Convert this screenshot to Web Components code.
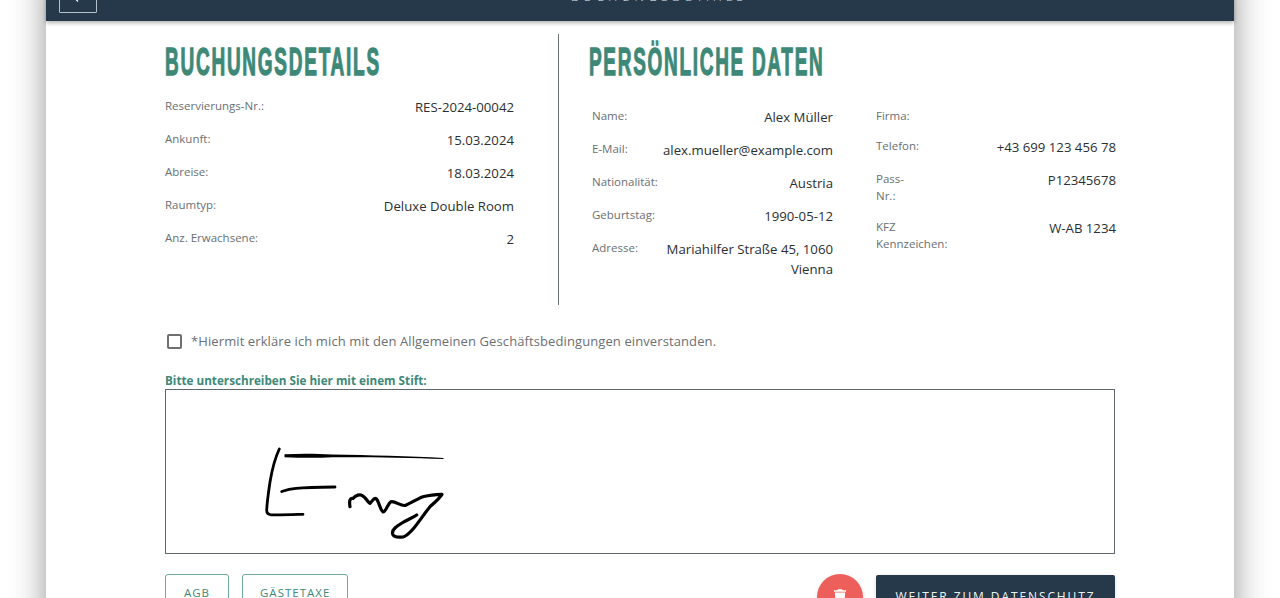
<!DOCTYPE html>
<html lang="de">
<head>
<meta charset="utf-8">
<title>Buchungsdetails</title>
<style>
html, body { margin: 0; height: 598px; overflow: hidden; background: #fff; }
body { font-family: "Open Sans", "Liberation Sans", sans-serif; color: #2b2f33; }
</style>
</head>
<body>
<checkin-page>
  <checkin-header slot="header">BUCHUNGSDETAILS</checkin-header>

  <details-split>
    <div slot="left">
      <section-title spacing="3.5">BUCHUNGSDETAILS</section-title>
      <detail-row><span slot="label">Reservierungs-Nr.:</span>RES-2024-00042</detail-row>
      <detail-row><span slot="label">Ankunft:</span>15.03.2024</detail-row>
      <detail-row><span slot="label">Abreise:</span>18.03.2024</detail-row>
      <detail-row><span slot="label">Raumtyp:</span>Deluxe Double Room</detail-row>
      <detail-row><span slot="label">Anz. Erwachsene:</span>2</detail-row>
    </div>
    <div slot="right">
      <section-title spacing="3.4">PERSÖNLICHE DATEN</section-title>
      <details-columns>
        <div slot="first">
          <detail-row><span slot="label">Name:</span>Alex Müller</detail-row>
          <detail-row><span slot="label">E-Mail:</span>alex.mueller@example.com</detail-row>
          <detail-row><span slot="label">Nationalität:</span>Austria</detail-row>
          <detail-row><span slot="label">Geburtstag:</span>1990-05-12</detail-row>
          <detail-row><span slot="label">Adresse:</span>Mariahilfer Straße 45, 1060 Vienna</detail-row>
        </div>
        <div slot="second">
          <detail-row><span slot="label">Firma:</span></detail-row>
          <detail-row><span slot="label">Telefon:</span>+43 699 123 456 78</detail-row>
          <detail-row><span slot="label">Pass-<br>Nr.:</span>P12345678</detail-row>
          <detail-row><span slot="label">KFZ<br>Kennzeichen:</span>W-AB 1234</detail-row>
        </div>
      </details-columns>
    </div>
  </details-split>

  <terms-check>*Hiermit erkläre ich mich mit den Allgemeinen Geschäftsbedingungen einverstanden.</terms-check>
  <signature-pad>Bitte unterschreiben Sie hier mit einem Stift:</signature-pad>

  <action-bar>
    <outline-button slot="left">AGB</outline-button>
    <outline-button slot="left">GÄSTETAXE</outline-button>
    <trash-button slot="right"></trash-button>
    <primary-button slot="right">WEITER ZUM DATENSCHUTZ</primary-button>
  </action-bar>
</checkin-page>

<script>
// kleine Hilfsfunktion: Shadow Root mit Markup anlegen
function shadow(el, html) {
  el.attachShadow({ mode: "open" }).innerHTML = html;
}

class CheckinPage extends HTMLElement {
  constructor() {
    super();
    shadow(this, `
      <style>
        :host { display: block; margin: -30px 46px 0; background: #fff; height: 700px;
                box-shadow: 0 0 32px rgba(0,0,0,.42); }
        .content { padding: 13px 119px 0; }
      </style>
      <slot name="header"></slot>
      <div class="content"><slot></slot></div>`);
  }
}
customElements.define("checkin-page", CheckinPage);

class CheckinHeader extends HTMLElement {
  constructor() {
    super();
    shadow(this, `
      <style>
        :host { display: flex; align-items: flex-end; height: 51px; box-sizing: border-box;
                padding: 0 13px 8px; background: #25394a; color: #d5dce1;
                box-shadow: 0 2px 4px rgba(0,0,0,.3); position: relative; }
        .back { box-sizing: border-box; width: 38px; height: 38px; flex: none;
                border: 1px solid #b4c2cc; border-radius: 1px; display: flex;
                align-items: center; justify-content: center; }
        .title { flex: 1; text-align: center; margin-bottom: 8px;
                 font-size: 13px; line-height: 18px; letter-spacing: 3.9px; font-weight: 300; }
      </style>
      <div class="back">
        <svg width="16" height="15" viewBox="0 0 16 15" fill="none" stroke="#fff" stroke-width="1.2">
          <path d="M15 7.5H1M8 .5l-7 7 7 7"/>
        </svg>
      </div>
      <div class="title"><slot></slot></div>`);
  }
}
customElements.define("checkin-header", CheckinHeader);

class DetailsSplit extends HTMLElement {
  constructor() {
    super();
    shadow(this, `
      <style>
        :host { display: flex; }
        .left { box-sizing: border-box; width: 394px; padding-right: 44px;
                border-right: 1px solid #6c7478; }
        .right { flex: 1; padding-left: 30px; padding-bottom: 13px; }
      </style>
      <div class="left"><slot name="left"></slot></div>
      <div class="right"><slot name="right"></slot></div>`);
  }
}
customElements.define("details-split", DetailsSplit);

class DetailsColumns extends HTMLElement {
  constructor() {
    super();
    shadow(this, `
      <style>
        :host { display: grid; grid-template-columns: 241px 240px; column-gap: 43px;
                padding: 10px 0 0 3px; }
      </style>
      <slot name="first"></slot>
      <slot name="second"></slot>`);
  }
}
customElements.define("details-columns", DetailsColumns);

class SectionTitle extends HTMLElement {
  constructor() {
    super();
    shadow(this, `
      <style>
        :host { display: block; height: 63px; }
        h2 { margin: 0; padding-top: 5px; font: 700 38px/46px "Liberation Sans", sans-serif;
             color: #3e8877; white-space: nowrap; transform-origin: left top;
             -webkit-text-stroke: 1.3px #3e8877; transform: scaleX(.5);
             letter-spacing: var(--spacing, 3px); }
      </style>
      <h2><slot></slot></h2>`);
    this.shadowRoot.querySelector("h2").style.setProperty("--spacing", this.getAttribute("spacing") + "px");
  }
}
customElements.define("section-title", SectionTitle);

class DetailRow extends HTMLElement {
  constructor() {
    super();
    shadow(this, `
      <style>
        :host { display: flex; justify-content: space-between; gap: 6px; margin-bottom: 13px; }
        .label { flex: none; font-size: 11.5px; line-height: 17.2px; color: #6a6f73; }
        .value { font-size: 13.2px; line-height: 20px; color: #2b2f33; text-align: right; }
      </style>
      <div class="label"><slot name="label"></slot></div>
      <div class="value"><slot></slot></div>`);
  }
}
customElements.define("detail-row", DetailRow);

class TermsCheck extends HTMLElement {
  constructor() {
    super();
    shadow(this, `
      <style>
        :host { display: flex; align-items: center; height: 20px; margin-top: 26px; padding-left: 2px; }
        .box { box-sizing: border-box; width: 15px; height: 15px; flex: none; margin-right: 9px;
               border: 2px solid #707070; border-radius: 2px; }
        .text { font-size: 13px; letter-spacing: .1px; color: #6b6f72; white-space: nowrap; }
      </style>
      <span class="box"></span>
      <span class="text"><slot></slot></span>`);
  }
}
customElements.define("terms-check", TermsCheck);

class SignaturePad extends HTMLElement {
  constructor() {
    super();
    shadow(this, `
      <style>
        :host { display: block; margin-top: 21px; }
        .label { font-size: 11.7px; font-weight: 700; line-height: 16px; margin-bottom: 1px; color: #3e8877; }
        .pad { box-sizing: border-box; height: 165px; border: 1px solid #5f686d; background: #fff; }
        svg { display: block; width: 948px; height: 163px; }
      </style>
      <div class="label"><slot></slot></div>
      <div class="pad">
        <svg viewBox="166 390 948 163" fill="none" stroke="#000" stroke-linecap="round" stroke-linejoin="round">
          <path stroke-width="2.8" d="M279.3 449C276 456 272 470 270 482C268.5 492 267 503 266.7 510C266.6 513 268 514.6 271 514.8C280 515 292 514.6 303 514.3"/>
          <path stroke="none" fill="#000" d="M284.5 454.3C300 453.4 318 453.6 332 454.6C370 455.4 410 456 443.5 458L443.5 459C410 457.6 370 457 332 457.2C318 458 300 457.8 284.5 457.2Z"/>
          <path stroke-width="2.8" d="M281.7 491.5C286 490 290 488.8 296 488.3C308 487.4 322 487.2 335 487"/>
          <path stroke-width="3.2" d="M350 506.7C349 501 350 497.5 353 498.5C356 495 360 494 362 495.5C366 497 368 503 370 503.3C372 502 373 498 376 498.5C379 501 380 510 383 512C386 512 388 503 391 501.7C396 501 400 506 405 505.5C412 503 418 498 424 496.5C430 495 437 494.5 442 494.3C439 499 434 503 430 506.7C424 514 419 522 413.5 528.5C410 532.5 407 536 403 537C398 537.5 393 537 392.5 533.5C392 529 397 526 402 523C407 520 412 518 416.7 515"/>
        </svg>
      </div>`);
  }
}
customElements.define("signature-pad", SignaturePad);

class ActionBar extends HTMLElement {
  constructor() {
    super();
    shadow(this, `
      <style>
        :host { display: flex; justify-content: space-between; align-items: flex-start; margin-top: 20px; }
        .group { display: flex; align-items: flex-start; gap: 13px; }
      </style>
      <div class="group"><slot name="left"></slot></div>
      <div class="group"><slot name="right"></slot></div>`);
  }
}
customElements.define("action-bar", ActionBar);

class OutlineButton extends HTMLElement {
  constructor() {
    super();
    shadow(this, `
      <style>
        :host { display: block; box-sizing: border-box; height: 36px; min-width: 64px; padding: 0 17px;
                border: 1px solid #6fa79a; border-radius: 3px; color: #3e8877; text-align: center;
                font-size: 11.5px; line-height: 35px; letter-spacing: 1px; }
      </style>
      <slot></slot>`);
  }
}
customElements.define("outline-button", OutlineButton);

class TrashButton extends HTMLElement {
  constructor() {
    super();
    shadow(this, `
      <style>
        :host { display: flex; justify-content: center; width: 46px; height: 46px; border-radius: 50%;
                background: #ec5f5a; box-shadow: 0 1px 4px rgba(0,0,0,.12); }
        svg { margin-top: 15px; }
      </style>
      <svg width="12" height="14" viewBox="0 0 14 16" fill="#fff">
        <path d="M4.5 0h5l.6 1.2H14v1.8H0V1.2h3.9zM1 4h12l-.8 12H1.8z"/>
      </svg>`);
  }
}
customElements.define("trash-button", TrashButton);

class PrimaryButton extends HTMLElement {
  constructor() {
    super();
    shadow(this, `
      <style>
        :host { display: block; box-sizing: border-box; width: 239px; height: 36px; margin-top: 1px;
                border-radius: 2px; background: #25394a; color: #eef1f3; text-align: center;
                font-size: 12px; line-height: 43px; letter-spacing: 1.9px;
                box-shadow: 0 1px 4px rgba(0,0,0,.15); }
      </style>
      <slot></slot>`);
  }
}
customElements.define("primary-button", PrimaryButton);
</script>
</body>
</html>
